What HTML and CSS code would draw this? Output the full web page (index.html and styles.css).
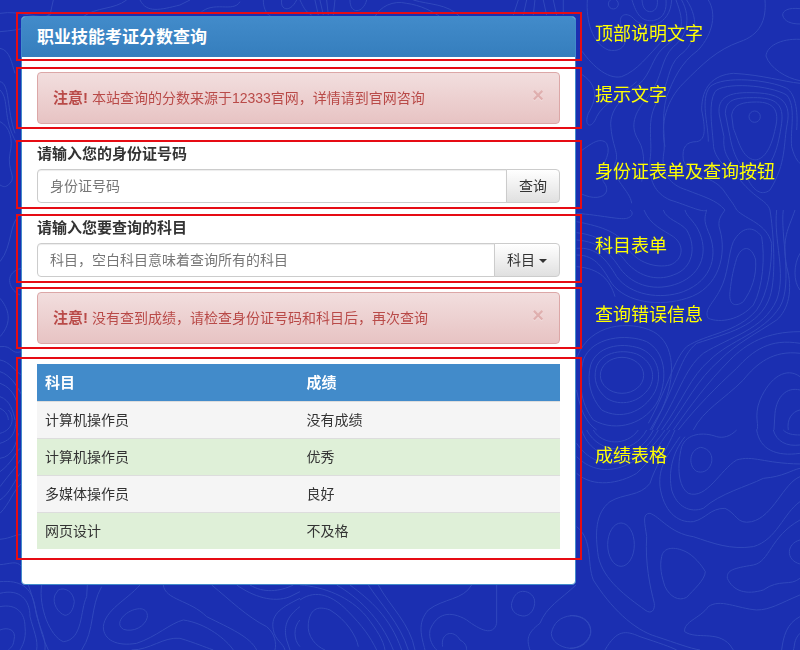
FILE: index.html
```html
<!DOCTYPE html>
<html lang="zh-CN">
<head>
    <meta charset="UTF-8">
    <meta name="viewport" content="width=device-width, initial-scale=1.0">
    <title>职业技能考证分数查询</title>
    <link rel="stylesheet" href="styles.css">
</head>
<body>
    <!-- 背景等高线 -->
    <svg class="contours" viewBox="0 0 800 650" preserveAspectRatio="xMinYMin slice" aria-hidden="true">
        <!-- 右上 -->
        <g transform="translate(570 0) scale(.3333)">
            <circle cx="130" cy="12" r="15"/>
            <path d="M216 0C218 28 230 36 244 35C258 32 264 18 262 0"/>
            <path d="M186 0C200 45 215 65 250 62C285 55 290 25 288 0"/>
            <path d="M52 0C48 60 65 130 115 150C170 160 175 115 155 80C140 45 170 30 195 60C230 90 300 80 305 0"/>
            <path d="M318 0C345 70 340 100 290 135C250 165 250 200 220 240C180 280 125 310 122 370C125 440 150 460 135 490C125 540 180 570 185 610"/>
            <path d="M335 0C365 55 350 110 310 140C270 180 280 230 235 290C190 340 180 380 205 420C230 460 220 520 215 545"/>
            <path d="M350 0C390 60 380 130 330 165C290 200 300 250 265 300C225 360 250 420 240 480C235 540 255 580 300 600C350 615 400 640 410 630"/>
            <path d="M415 0C440 40 430 100 385 150C330 190 310 240 290 290C270 360 290 420 280 470C275 520 300 555 350 570C400 590 440 600 465 630"/>
            <path d="M585 0C590 60 570 105 510 125C440 150 400 190 340 250C290 300 270 370 285 440"/>
            <path d="M690 26C655 22 638 32 638 45C642 65 665 72 690 72"/>
            <path d="M690 118C630 115 590 140 588 168C600 205 650 235 690 242"/>
            <path d="M30 145C60 190 110 240 155 230C205 210 230 170 280 120"/>
            <path d="M30 220C80 250 85 290 55 340C40 380 65 390 80 350C100 310 150 290 200 245"/>
            <path d="M30 455C65 430 90 410 110 430C130 470 80 500 100 545C130 580 90 610 30 580"/>
            <circle cx="554" cy="350" r="17"/>
            <path d="M485 345C490 312 520 306 560 306C610 306 630 330 616 385C605 440 585 478 555 480C515 475 505 420 490 385Z"/>
            <path d="M466 340C468 300 490 293 550 293C620 292 642 315 635 370C625 440 610 495 570 520C520 530 490 470 480 410Z"/>
            <path d="M448 345C440 290 480 277 540 278C625 278 665 300 652 370C640 430 650 490 600 570C575 590 550 570 535 540C500 500 455 480 462 410Z"/>
            <path d="M430 430C425 370 415 310 435 275C460 245 600 255 650 285C680 320 660 390 665 440C675 480 690 490 690 490"/>
            <path d="M415 425C415 370 390 300 420 260C460 225 600 240 650 265C675 280 685 330 680 390"/>
            <path d="M340 480C335 440 350 425 380 425C410 420 405 380 395 330C395 260 430 225 490 220C580 225 640 245 690 250"/>
            <path d="M340 480C360 540 420 520 460 570C480 600 490 610 500 630"/>
            <path d="M430 430C430 480 480 510 510 540C560 600 590 600 600 630"/>
        </g>
        <!-- 右中 -->
        <g transform="translate(570 210) scale(.3333)">
            <path d="M20 10C90 15 150 30 170 25C190 20 190 5 180 0"/>
            <path d="M20 35C100 50 150 70 170 110C200 160 260 175 300 165C340 150 345 105 310 80C280 60 240 45 222 0"/>
            <path d="M20 68C90 75 130 110 160 145C200 200 260 215 310 195C370 175 380 110 350 60C330 35 290 30 280 0"/>
            <path d="M20 90C90 95 120 130 150 175C190 230 260 245 325 220C400 190 415 120 385 60C370 30 350 20 345 0"/>
            <path d="M20 115C80 110 110 150 140 200C180 255 270 270 340 245C430 210 445 130 415 65C400 30 405 20 410 0"/>
            <path d="M20 135C80 135 100 180 125 220C170 280 270 290 350 265C450 235 470 130 450 60C440 30 455 15 465 0"/>
            <path d="M20 170C90 175 120 210 135 260"/>
            <path d="M500 145C515 105 545 105 557 150C560 200 545 240 520 275C500 290 475 290 480 245C485 200 490 180 500 145Z"/>
            <path d="M490 95C515 50 550 45 575 80C585 140 580 230 550 285C510 330 450 340 415 325C400 300 430 280 450 240C475 195 475 130 490 95Z"/>
            <path d="M500 0C530 30 590 40 605 100C605 170 595 250 560 300C500 370 410 370 350 410C310 450 300 520 235 640"/>
            <path d="M600 0C610 60 620 200 600 260C570 350 470 370 380 400C330 440 330 500 245 660"/>
            <path d="M620 0C610 90 650 190 620 270C580 360 480 380 400 430C340 480 330 550 260 660"/>
            <path d="M640 0C630 70 670 220 630 290C580 370 480 390 420 450C360 500 340 570 275 660"/>
            <path d="M675 0C655 60 635 80 650 170C670 240 655 300 620 330C560 370 500 400 450 450C380 510 350 580 290 660"/>
            <path d="M690 130C670 165 670 215 690 240"/>
            <path d="M690 365C590 365 530 400 480 450C410 520 360 590 310 660"/>
            <path d="M690 400C600 385 550 420 500 475C440 530 380 590 325 660"/>
            <path d="M690 430C610 420 560 460 520 510C460 570 400 600 370 660"/>
            <path d="M690 500C650 470 600 500 570 570C550 620 570 650 560 660"/>
            <path d="M690 540C650 530 620 560 615 610L612 660M690 600C665 605 650 630 655 660"/>
            <ellipse cx="156" cy="496" rx="65" ry="54"/>
            <path d="M78 475C90 430 150 415 200 432C240 450 260 490 240 530C210 580 150 590 110 565C80 540 70 510 78 475Z"/>
            <path d="M62 465C80 410 150 395 210 415C260 435 280 490 255 545C220 610 150 630 95 600C60 560 50 510 62 465Z"/>
            <path d="M40 450C65 380 170 370 230 395C285 425 295 500 265 570C230 640 140 670 70 630C30 580 25 510 40 450Z"/>
            <path d="M22 440C60 340 180 330 250 365C315 400 320 500 275 600L240 660M20 540C30 600 50 640 80 660"/>
        </g>
        <!-- 右下 -->
        <g transform="translate(570 430) scale(.3333)">
            <path d="M70 0C95 45 170 50 205 0M50 0C90 75 190 75 230 0M35 0C70 105 200 100 250 0M20 40C80 130 200 120 265 0M20 80C90 150 200 125 285 0"/>
            <path d="M20 130C70 175 150 160 200 130C250 85 260 50 300 0"/>
            <path d="M315 0C290 60 255 110 240 160C210 200 160 190 120 215C75 250 75 310 85 380C100 450 170 500 225 540C245 555 255 540 253 520C240 470 225 400 230 320C225 280 215 250 240 250C270 260 300 310 370 320C430 340 480 360 550 350C620 330 640 250 690 215"/>
            <path d="M330 20C290 80 265 110 270 170C280 240 320 280 370 275C410 265 420 235 465 235C500 250 500 285 545 275C610 260 640 160 690 140"/>
            <path d="M345 20C305 70 295 130 305 180C320 230 360 250 400 235C450 190 530 170 580 145C640 140 665 120 690 115"/>
            <path d="M500 0C480 20 460 25 440 20C400 5 350 10 335 50C320 110 325 170 355 190C410 210 450 120 500 90C550 75 580 100 690 102"/>
            <path d="M392 52C420 55 430 80 424 100C415 125 395 130 380 124C355 110 355 60 392 52Z"/>
            <path d="M560 0C570 60 620 80 690 70M610 0C620 35 650 50 690 45M640 0C650 12 670 15 690 15"/>
            <ellipse cx="153" cy="344" rx="40" ry="65"/>
            <path d="M275 380C280 350 315 350 345 364C370 375 395 405 406 425C405 450 370 480 350 502C325 515 300 500 285 470C275 440 268 410 275 380Z"/>
            <path d="M690 330C650 340 645 390 690 402M690 270C600 320 600 395 550 405C490 415 470 420 472 445C490 485 530 495 580 480C630 445 660 470 690 445"/>
            <path d="M690 495C630 520 600 540 560 540C500 535 450 505 415 530C390 565 340 575 344 605C380 630 440 600 480 645L490 660M690 560C650 580 640 620 635 660M690 610C670 630 675 650 670 660"/>
            <path d="M20 290C70 330 50 400 70 450C120 530 190 600 260 620C320 640 360 655 390 660"/>
            <path d="M0 557C45 555 65 580 62 610C55 645 25 655 0 655M105 660C140 600 165 600 210 620C270 640 300 650 320 660"/>
        </g>
        <!-- 左侧和底部 -->
        <g transform="translate(0 410) scale(.3333)">
            <path d="M0 70C40 60 45 20 25 0M0 100C50 85 45 50 50 20M0 145C40 140 50 95 55 70M0 185C35 160 45 130 60 115M0 230C30 190 50 170 60 150M0 270C30 250 45 210 60 190M0 310C30 280 40 240 65 220M0 388C35 385 50 370 70 375M0 464C30 462 50 450 65 470"/>
            <path d="M0 515C60 510 95 530 105 590C110 640 140 680 135 720M0 550C60 535 90 570 90 620C100 660 115 690 110 720M0 590C50 580 75 610 75 650C80 690 65 710 60 720M0 660C25 650 50 660 42 690C40 710 30 715 25 720"/>
            <path d="M85 525C110 590 115 660 145 720M125 525C115 590 150 680 190 695C250 690 240 600 260 560L262 525M305 530C270 590 285 660 245 720"/>
            <path d="M175 540C195 530 220 545 223 575C220 600 210 615 195 616C175 610 155 580 165 555Z"/>
            <path d="M420 525C380 570 315 600 310 650C310 690 350 710 410 700C470 680 510 640 550 630C620 640 680 690 700 720"/>
            <path d="M380 610C410 590 445 590 442 622C435 650 400 668 370 658C350 645 360 625 380 610Z"/>
            <path d="M490 525C495 570 570 570 620 620C690 655 750 680 770 720M395 720C450 720 490 680 540 685C590 700 610 710 640 720M635 525C690 570 740 620 800 650C825 670 830 700 825 720"/>
            <path d="M710 525C760 560 820 580 870 560L900 545M750 525C790 550 840 545 880 525M900 565C850 590 810 610 820 660C825 690 850 700 855 720M900 590C860 620 850 650 860 690L870 720M900 630C880 650 880 690 900 710"/>
        </g>
        <g transform="translate(300 410) scale(.3333)">
            <path d="M0 570C50 535 100 560 140 600C190 650 210 680 230 720M25 640C30 600 50 585 90 600C140 630 170 680 175 710M25 640C20 680 50 710 75 720M0 525C70 530 150 560 200 620C230 660 250 690 255 720M110 525C170 560 240 620 280 720M150 525C210 570 270 620 305 720M205 525C240 580 300 640 325 720M235 525C270 590 330 640 345 720"/>
            <path d="M515 525C490 570 430 565 385 600C350 640 365 680 375 720M590 525V640C580 680 540 660 500 630C450 600 410 610 390 660C385 690 400 710 410 720M428 710C420 670 460 655 480 690C500 700 500 715 500 720"/>
            <path d="M668 544C690 544 706 560 704 580C702 605 685 620 668 618C645 615 632 600 635 580C640 560 650 545 668 544ZM828 525C780 570 740 590 720 640C680 670 680 690 690 720"/>
            <path d="M815 617C850 617 875 640 872 670C865 695 840 715 810 715C780 712 755 695 754 670C760 640 780 620 815 617Z"/>
        </g>
        <!-- 左上和顶部 -->
        <g transform="scale(.3333)">
            <path d="M0 40C60 30 120 60 150 45L160 0M0 95C60 90 120 80 150 40M0 145C30 150 35 190 45 220M0 245C30 250 20 330 45 400M0 365C30 380 40 420 30 460C20 510 50 530 30 550C15 565 10 560 0 555M0 270C30 300 5 350 50 430"/>
            <path d="M250 50C290 20 340 30 380 0M420 0C440 40 480 30 540 15L570 0M600 40C640 0 700 40 720 5M790 0C790 35 810 60 835 50M845 0C840 30 870 40 890 0"/>
            <path d="M900 0C910 20 915 35 935 45M945 0L955 45M960 0L970 45M980 0L985 45M1005 0L1000 45M1050 0C1050 45 1090 40 1100 0M1125 50C1140 20 1180 0 1220 10C1260 15 1300 35 1320 50M1240 0C1290 15 1340 10 1380 50M1540 45L1555 0M1570 45L1580 0M1600 45L1605 0M1640 45L1630 0M1670 45L1660 0M1690 45L1690 0"/>
        </g>
        <g transform="translate(0 205) scale(.3333)">
            <path d="M65 25C25 50 40 120 0 170M65 190C15 200 20 250 60 270M0 280C25 310 40 350 0 395M0 425C40 420 30 450 65 440M0 465C30 470 45 500 65 510M0 500C30 510 50 540 65 570M0 535C25 545 40 560 50 590M0 575C30 585 40 620 45 645M0 610C20 620 25 635 25 645"/>
        </g>
    </svg>

    <div class="panel">
        <div class="mark mark-title">
            <div class="panel-heading">
                <h3 class="panel-title">职业技能考证分数查询</h3>
            </div>
            <span class="note">顶部说明文字</span>
        </div>

        <div class="mark mark-tip">
            <div class="alert">
                <button type="button" class="close" aria-label="关闭">×</button>
                <strong>注意!</strong> 本站查询的分数来源于12333官网，详情请到官网咨询
            </div>
            <span class="note">提示文字</span>
        </div>

        <div class="mark mark-id">
            <label for="id-number">请输入您的身份证号码</label>
            <div class="input-group">
                <input type="text" id="id-number" placeholder="身份证号码">
                <button type="button" class="btn">查询</button>
            </div>
            <span class="note">身份证表单及查询按钮</span>
        </div>

        <div class="mark mark-subject">
            <label for="subject">请输入您要查询的科目</label>
            <div class="input-group">
                <input type="text" id="subject" placeholder="科目，空白科目意味着查询所有的科目">
                <div class="dropdown">
                    <select class="btn" aria-label="科目">
                        <option>科目</option>
                    </select>
                </div>
            </div>
            <span class="note">科目表单</span>
        </div>

        <div class="mark mark-error">
            <div class="alert">
                <button type="button" class="close" aria-label="关闭">×</button>
                <strong>注意!</strong> 没有查到成绩，请检查身份证号码和科目后，再次查询
            </div>
            <span class="note">查询错误信息</span>
        </div>

        <div class="mark mark-table">
            <table class="table">
                <thead>
                    <tr><th>科目</th><th>成绩</th></tr>
                </thead>
                <tbody>
                    <tr><td>计算机操作员</td><td>没有成绩</td></tr>
                    <tr class="success"><td>计算机操作员</td><td>优秀</td></tr>
                    <tr><td>多媒体操作员</td><td>良好</td></tr>
                    <tr class="success"><td>网页设计</td><td>不及格</td></tr>
                </tbody>
            </table>
            <span class="note">成绩表格</span>
        </div>
    </div>
</body>
</html>
```

FILE: styles.css
```css
* { margin: 0; padding: 0; box-sizing: border-box; }
body {
    min-height: 100vh;
    padding: 16px 224px 16px 21px;
    background: #1b2fb1;
    color: #333;
    font-family: "Liberation Sans", "Noto Sans CJK SC", sans-serif;
    font-size: 14px;
    line-height: 20px;
}
input, button, select { font: inherit; color: inherit; }

/* 背景 */
.contours { position: fixed; top: 0; left: 0; z-index: -1; width: 100%; height: 100%; }
.contours g { fill: none; stroke: #3048bd; stroke-width: 3; }

/* 面板 */
.panel {
    padding-bottom: 24px;
    background: #fff;
    border: 1px solid #428bca;
    border-radius: 4px;
}
.panel-heading {
    padding: 11px 15px 9px;
    background: linear-gradient(#428bca, #357ebd);
    border-radius: 3px 3px 0 0;
    color: #fff;
}
.panel-title { font-size: 17px; line-height: 20px; }

/* 红框和说明 */
.mark { position: relative; margin: 0 -7px 0 -6px; padding: 3px 20px 3px 19px; border: 2px solid #e60c14; }
.mark-title { margin-top: -5px; padding: 3px 5px 2px 4px; }
.mark-tip { margin-top: 6px; }
.mark-id { margin-top: 11px; padding-top: 2px; padding-bottom: 4px; }
.mark-subject { margin-top: 5px; padding-top: 2px; padding-bottom: 4px; }
.mark-error { margin-top: 4px; }
.mark-table { margin-top: 8px; padding-top: 5px; padding-bottom: 9px; }
.note {
    position: absolute;
    top: 0;
    bottom: 0;
    left: 100%;
    display: flex;
    align-items: center;
    margin-left: 15px;
    padding-bottom: 6px;
    color: #ff0;
    font-size: 18px;
    white-space: nowrap;
}

/* 提示 */
.alert {
    padding: 15px;
    background: linear-gradient(#f2dede, #e7c3c3);
    border: 1px solid #dca7a7;
    border-radius: 4px;
    color: #b94a48;
}
.alert strong { font-size: 15px; }
.close {
    float: right;
    background: none;
    border: 0;
    color: #b94a48;
    font-size: 20px;
    font-weight: bold;
    line-height: 14px;
    opacity: .25;
    text-shadow: 0 1px 0 #fff;
}

/* 表单 */
label { display: block; margin-bottom: 5px; font-size: 15px; font-weight: bold; }
.input-group { display: flex; }
.input-group input {
    flex: 1;
    min-width: 0;
    height: 34px;
    padding: 6px 12px;
    border: 1px solid #ccc;
    border-radius: 4px 0 0 4px;
    box-shadow: inset 0 1px 1px rgba(0, 0, 0, .075);
}
.input-group input::placeholder { color: #777; }
.btn {
    height: 34px;
    margin-left: -1px;
    padding: 6px 12px;
    background: linear-gradient(#fff, #e0e0e0);
    border: 1px solid #ccc;
    border-radius: 0 4px 4px 0;
}
.dropdown { position: relative; }
.dropdown select { padding-right: 24px; appearance: none; }
.dropdown::after {
    content: "";
    position: absolute;
    top: 16px;
    right: 13px;
    border: 4px solid transparent;
    border-top-color: #333;
    border-bottom: 0;
    pointer-events: none;
}

/* 成绩表格 */
.table { width: 100%; border-collapse: collapse; table-layout: fixed; }
.table th { padding: 8px; background: #428bca; border-top: 1px solid #428bca; color: #fff; font-size: 15px; text-align: left; }
.table td { padding: 8px; background: #f5f5f5; border-top: 1px solid #ddd; }
.table .success td { background: #dff0d8; }
```
